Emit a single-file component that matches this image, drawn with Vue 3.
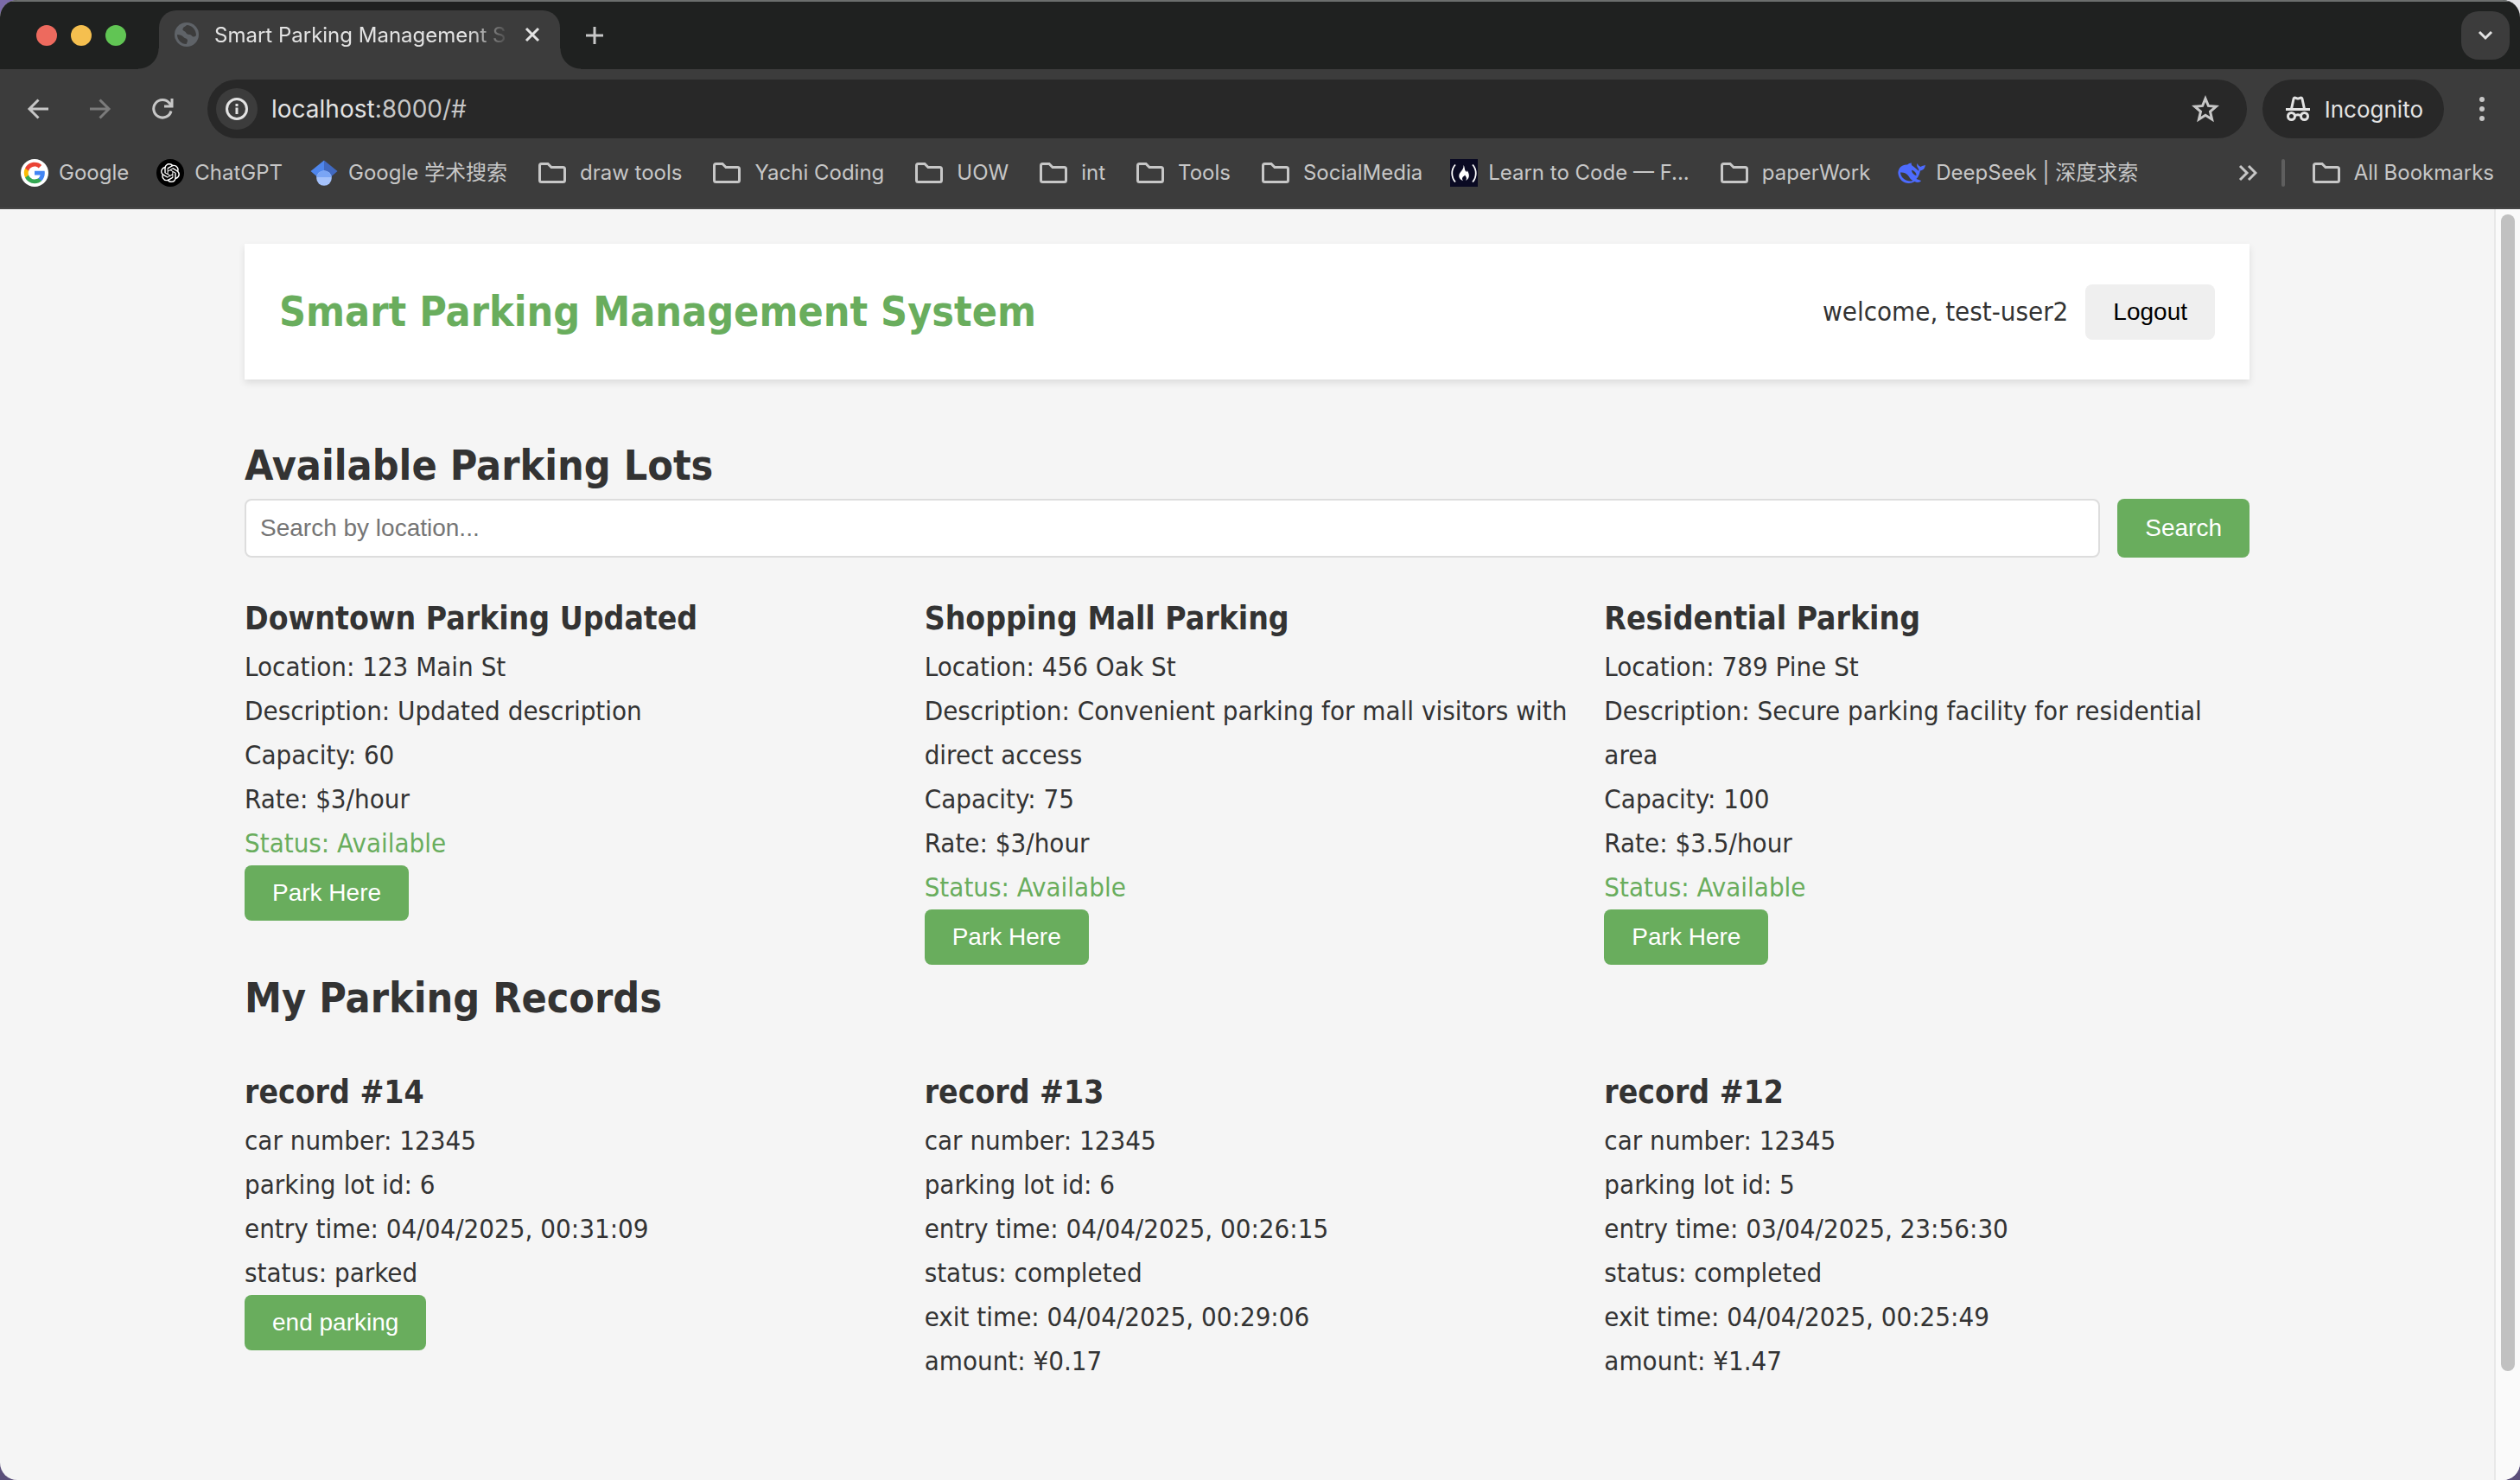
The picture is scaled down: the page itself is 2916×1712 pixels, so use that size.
<script setup>
import { ref } from 'vue'

const location = ref('')

const bookmarks = [
  { icon: 'google', label: 'Google' },
  { icon: 'chatgpt', label: 'ChatGPT' },
  { icon: 'scholar', label: 'Google 学术搜索' },
  { icon: 'folder', label: 'draw tools' },
  { icon: 'folder', label: 'Yachi Coding' },
  { icon: 'folder', label: 'UOW' },
  { icon: 'folder', label: 'int' },
  { icon: 'folder', label: 'Tools' },
  { icon: 'folder', label: 'SocialMedia' },
  { icon: 'fcc', label: 'Learn to Code — F...' },
  { icon: 'folder', label: 'paperWork' },
  { icon: 'deepseek', label: 'DeepSeek | 深度求索' },
]

const lots = [
  { name: 'Downtown Parking Updated', location: '123 Main St', description: 'Updated description', capacity: 60, rate: 3 },
  { name: 'Shopping Mall Parking', location: '456 Oak St', description: 'Convenient parking for mall visitors with direct access', capacity: 75, rate: 3 },
  { name: 'Residential Parking', location: '789 Pine St', description: 'Secure parking facility for residential area', capacity: 100, rate: 3.5 },
]

const records = [
  { id: 14, car: '12345', lot: 6, entry: '04/04/2025, 00:31:09', status: 'parked' },
  { id: 13, car: '12345', lot: 6, entry: '04/04/2025, 00:26:15', status: 'completed', exit: '04/04/2025, 00:29:06', amount: '0.17' },
  { id: 12, car: '12345', lot: 5, entry: '03/04/2025, 23:56:30', status: 'completed', exit: '04/04/2025, 00:25:49', amount: '1.47' },
]
</script>

<template>
  <div class="window">
    <div class="tabstrip">
      <div class="lights">
        <span class="light red"></span>
        <span class="light yellow"></span>
        <span class="light green"></span>
      </div>
      <div class="tab">
        <svg class="favicon" viewBox="0 0 28 28">
          <circle cx="14" cy="14" r="14" fill="#5f6368" />
          <path d="M3 14c3 0 6 1 7.500 3 1.500 1.800 4 1 4.500 3.500.3 1.800-1 3-1.200 4.500C7.500 25 3 20 3 14zM14 3c-1 1.500-4 2-4.500 4.500C9 10 12 9.500 13 11.500c.8 1.700 2.500 2.800 4.500 2.500 2-.3 2.500 2.500 4.500 2.500 1.200 0 2.300-.7 3-1.500C25 8 20 3 14 3z" fill="#3c3c3c" />
        </svg>
        <span class="tab-title">Smart Parking Management S</span>
        <button class="icon-button" aria-label="Close tab">
          <svg width="20" height="20" viewBox="0 0 20 20"><path d="M3 3l14 14M17 3L3 17" stroke="#e3e3e3" stroke-width="3" /></svg>
        </button>
      </div>
      <button class="icon-button new-tab" aria-label="New tab">
        <svg width="20" height="20" viewBox="0 0 20 20"><path d="M10 0v20M0 10h20" stroke="#c7c7c7" stroke-width="3" /></svg>
      </button>
      <button class="tab-search" aria-label="Search tabs">
        <svg width="18" height="12" viewBox="0 0 18 12"><path d="M2 2l7 7 7-7" fill="none" stroke="#e3e3e3" stroke-width="3" /></svg>
      </button>
    </div>

    <div class="toolbar">
      <div class="nav">
        <button class="icon-button" aria-label="Back">
          <svg width="26" height="26" viewBox="0 0 26 26"><path d="M25 13H3M13.500 2.500L3 13l10.500 10.500" fill="none" stroke="#c7c7c7" stroke-width="3" /></svg>
        </button>
        <button class="icon-button" aria-label="Forward">
          <svg width="26" height="26" viewBox="0 0 26 26"><path d="M1 13h22M12.500 2.500L23 13 12.500 23.500" fill="none" stroke="#7b7b7b" stroke-width="3" /></svg>
        </button>
        <button class="icon-button" aria-label="Reload">
          <svg width="26" height="26" viewBox="0 0 26 26"><path d="M23 15.500A10.300 10.300 0 1 1 21 6.200L23.500 9M24 1v9h-9" fill="none" stroke="#c7c7c7" stroke-width="3" /></svg>
        </button>
      </div>
      <div class="address">
        <span class="info">
          <svg width="26" height="26" viewBox="0 0 26 26"><circle cx="13" cy="13" r="11.500" fill="none" stroke="#e3e3e3" stroke-width="3" /><path d="M13 11.500v7.500M13 7v3" stroke="#e3e3e3" stroke-width="3" /></svg>
        </span>
        <span class="url">localhost<span class="url-rest">:8000/#</span></span>
        <button class="icon-button star" aria-label="Bookmark this page">
          <svg width="32" height="32" viewBox="0 0 32 32"><path d="M16 4l3.400 8.400 9 .8-6.900 5.900 2.100 8.900-7.600-4.700L8.400 28l2.100-8.900-6.900-5.900 9-.8z" fill="none" stroke="#c7c7c7" stroke-width="3" /></svg>
        </button>
      </div>
      <div class="incognito">
        <svg width="30" height="30" viewBox="0 0 30 30">
          <path d="M1 15.500h28" stroke="#e3e3e3" stroke-width="3" />
          <path d="M7.500 15L10 3.500c.4-1.500 1.500-1.600 2.600-1.200l1.400.6c.7.300 1.300.3 2 0l1.400-.6c1.100-.4 2.200-.3 2.600 1.200L22.500 15" fill="none" stroke="#e3e3e3" stroke-width="3" />
          <circle cx="7.500" cy="23.500" r="4" fill="none" stroke="#e3e3e3" stroke-width="3" />
          <circle cx="22.500" cy="23.500" r="4" fill="none" stroke="#e3e3e3" stroke-width="3" />
          <path d="M11 23c2.500-1.600 5.500-1.600 8 0" fill="none" stroke="#e3e3e3" stroke-width="3" />
        </svg>
        <span>Incognito</span>
      </div>
      <button class="icon-button menu" aria-label="Menu">
        <svg width="6" height="28" viewBox="0 0 6 28" fill="#c7c7c7"><circle cx="3" cy="3" r="3" /><circle cx="3" cy="14" r="3" /><circle cx="3" cy="25" r="3" /></svg>
      </button>
    </div>

    <nav class="bookmarks" aria-label="Bookmarks">
      <a v-for="b in bookmarks" :key="b.label" class="bookmark" href="#">
        <svg v-if="b.icon === 'folder'" class="folder" viewBox="0 0 40 32"><path d="M5.500 24.500v-17q0-2 2-2h7.500l4 4h13.500q2 0 2 2v13q0 2-2 2h-25q-2 0-2-2z" fill="none" stroke="#c7c7c7" stroke-width="3" /></svg>
        <svg v-else-if="b.icon === 'google'" class="site" viewBox="0 0 32 32">
          <circle cx="16" cy="16" r="16" fill="#fff" />
          <path d="M27.800 16.300c0-.9-.1-1.700-.2-2.500H16v4.700h6.600c-.3 1.500-1.100 2.800-2.400 3.700v3h3.900c2.300-2.100 3.700-5.200 3.700-8.900z" fill="#4285f4" />
          <path d="M16 28.200c3.300 0 6-1.100 8.100-2.900l-3.900-3c-1.100.7-2.500 1.200-4.200 1.200-3.200 0-5.900-2.100-6.900-5H5.100v3.100c2 4 6.100 6.600 10.900 6.600z" fill="#34a853" />
          <path d="M9.100 18.400c-.2-.7-.4-1.500-.4-2.300s.1-1.600.4-2.300v-3.100h-4C4.200 12.300 3.800 14.100 3.800 16s.5 3.800 1.300 5.500z" fill="#fbbc05" />
          <path d="M16 8.600c1.800 0 3.400.6 4.700 1.800l3.500-3.500C22 4.900 19.300 3.800 16 3.800c-4.800 0-8.900 2.700-10.900 6.800l4 3.100c1-2.900 3.700-5.100 6.900-5.100z" fill="#ea4335" />
        </svg>
        <svg v-else-if="b.icon === 'chatgpt'" class="site" viewBox="0 0 32 32">
          <circle cx="16" cy="16" r="16" fill="#000" />
          <g transform="translate(5 5) scale(.9167)" fill="#fff"><path d="M22.282 9.821a5.985 5.985 0 0 0-.516-4.910 6.046 6.046 0 0 0-6.510-2.900A6.065 6.065 0 0 0 4.981 4.182a5.985 5.985 0 0 0-3.998 2.900 6.046 6.046 0 0 0 .743 7.097 5.980 5.980 0 0 0 .510 4.911 6.051 6.051 0 0 0 6.515 2.900A5.985 5.985 0 0 0 13.260 24a6.056 6.056 0 0 0 5.772-4.206 5.990 5.990 0 0 0 3.998-2.900 6.056 6.056 0 0 0-.747-7.073zM13.260 22.430a4.476 4.476 0 0 1-2.876-1.040l.141-.081 4.779-2.758a.795.795 0 0 0 .392-.681v-6.737l2.020 1.168a.071.071 0 0 1 .038.052v5.583a4.504 4.504 0 0 1-4.494 4.494zM3.600 18.304a4.470 4.470 0 0 1-.535-3.014l.142.085 4.783 2.759a.771.771 0 0 0 .780 0l5.843-3.369v2.332a.080.080 0 0 1-.033.062L9.740 19.950a4.500 4.500 0 0 1-6.140-1.646zM2.340 7.896a4.485 4.485 0 0 1 2.366-1.973V11.600a.766.766 0 0 0 .388.676l5.815 3.355-2.020 1.168a.076.076 0 0 1-.071 0l-4.830-2.786A4.504 4.504 0 0 1 2.340 7.872zm16.597 3.855l-5.833-3.387L15.119 7.200a.076.076 0 0 1 .071 0l4.830 2.791a4.494 4.494 0 0 1-.676 8.105v-5.678a.790.790 0 0 0-.407-.667zm2.010-3.023l-.141-.085-4.774-2.782a.776.776 0 0 0-.785 0L9.409 9.230V6.897a.066.066 0 0 1 .028-.061l4.830-2.787a4.500 4.500 0 0 1 6.680 4.660zm-12.640 4.135l-2.020-1.164a.080.080 0 0 1-.038-.057V6.075a4.500 4.500 0 0 1 7.375-3.453l-.142.080L8.704 5.460a.795.795 0 0 0-.393.681zm1.097-2.365l2.602-1.500 2.607 1.500v2.999l-2.597 1.500-2.607-1.500z" /></g>
        </svg>
        <svg v-else-if="b.icon === 'scholar'" class="site" viewBox="0 0 32 32">
          <path d="M16 1.500L.5 14 8 20.500l8-2z" fill="#4f86ec" />
          <path d="M16 1.500L31.500 14 24 20.500l-8-2z" fill="#4169c0" />
          <circle cx="16" cy="22" r="8.800" fill="#a5c2fb" />
          <path d="M7.300 21a8.800 8.800 0 0 1 17.400 0z" fill="#7aa5f5" />
        </svg>
        <svg v-else-if="b.icon === 'fcc'" class="site" viewBox="0 0 32 32">
          <path d="M0 0h32v32H0z" fill="#0a0a23" />
          <path d="M6 6.500C1 12 1 21 6 26.500M26 6.500c5 5.500 5 14.500 0 20" fill="none" stroke="#fff" stroke-width="1.800" />
          <path d="M15.500 7c2 3 .5 5 3 7.500 1 1 1.200-.2.800-1.500 2.500 2.500 4 7.500.7 10.500l-2 1.500c2-3 .5-4.500-1-6.500-.3 1.500-1.500 1-2.500 2.500-1 1.600-.5 3 .7 4.200-6-2-6-7.200-2.700-10.700 2-2.200 3.400-4.300 3-7.500z" fill="#fff" />
        </svg>
        <svg v-else class="site" viewBox="0 0 32 32">
          <path d="M.3 16C.8 9.500 5.500 6 11 6.500c1.500-1.200 3-1.900 5-2-.8 1.600.2 3 2 4 2.200 1.400 4 3.300 6 5.300.8-1 .2-2.600-1-4.100-1.200-1.500-.9-3.300-.5-4.700.8 2 2.300 3 4 4 1.500-1.500 3.300-1 5.400-2.300-.2 3.800-2.700 6.300-6 6.800-.4 3.600-1.900 6.800-4.400 9.500l5.500 2c-1.500 2.500-5 2.300-7.500 1C12 30.500 1.500 27 .3 16zM3 15.500c.8 7.500 8.500 11.500 14.500 9.500-3-1.500-4-4-6-6.500-2.200-2.400-5-3.500-8.500-3zM16 12.800c.3 3 2.500 5.700 5.500 6.200.2-3-2.500-5.700-5.500-6.200z" fill="#4d6bfe" fill-rule="evenodd" />
        </svg>
        <span>{{ b.label }}</span>
      </a>
      <div class="bookmarks-end">
        <button class="icon-button" aria-label="More bookmarks">
          <svg width="22" height="20" viewBox="0 0 22 20"><path d="M2 2l8 8-8 8M12 2l8 8-8 8" fill="none" stroke="#c7c7c7" stroke-width="3" /></svg>
        </button>
        <span class="divider"></span>
        <a class="bookmark" href="#">
          <svg class="folder" viewBox="0 0 40 32"><path d="M5.500 24.500v-17q0-2 2-2h7.500l4 4h13.500q2 0 2 2v13q0 2-2 2h-25q-2 0-2-2z" fill="none" stroke="#c7c7c7" stroke-width="3" /></svg>
          <span>All Bookmarks</span>
        </a>
      </div>
    </nav>

    <div class="viewport">
      <div class="page">
        <div class="container">
          <header class="header">
            <h1>Smart Parking Management System</h1>
            <div class="user">
              <span>welcome, test-user2</span>
              <button class="btn btn-plain">Logout</button>
            </div>
          </header>

          <main>
            <h2>Available Parking Lots</h2>
            <form class="search" @submit.prevent>
              <input v-model="location" type="text" placeholder="Search by location..." aria-label="Search by location" />
              <button class="btn" type="submit">Search</button>
            </form>
            <div class="grid">
              <section v-for="lot in lots" :key="lot.name">
                <h3>{{ lot.name }}</h3>
                <p>Location: {{ lot.location }}</p>
                <p>Description: {{ lot.description }}</p>
                <p>Capacity: {{ lot.capacity }}</p>
                <p>Rate: ${{ lot.rate }}/hour</p>
                <p class="available">Status: Available</p>
                <button class="btn">Park Here</button>
              </section>
            </div>

            <h2>My Parking Records</h2>
            <div class="grid records">
              <section v-for="r in records" :key="r.id">
                <h3>record #{{ r.id }}</h3>
                <p>car number: {{ r.car }}</p>
                <p>parking lot id: {{ r.lot }}</p>
                <p>entry time: {{ r.entry }}</p>
                <p>status: {{ r.status }}</p>
                <template v-if="r.exit">
                  <p>exit time: {{ r.exit }}</p>
                  <p>amount: ¥{{ r.amount }}</p>
                </template>
                <button v-else class="btn">end parking</button>
              </section>
            </div>
          </main>
        </div>
      </div>
      <div class="scrollbar"><div class="thumb"></div></div>
    </div>
  </div>
</template>

<style>
body {
  background: linear-gradient(90deg, #7a6aa8 50%, #e4e4e8 50%) top / 100% 50% no-repeat, #5b4f7a;
}
</style>

<style scoped>
* {
  box-sizing: border-box;
}

.window {
  display: flex;
  flex-direction: column;
  min-height: 100vh;
  border-radius: 20px;
  overflow: hidden;
  background: #f5f5f5;
  color: #c7c7c7;
  font-family: Inter, "Noto Sans CJK SC", sans-serif;
  font-size: 24px;
}

.icon-button {
  display: flex;
  padding: 0;
  border: 0;
  background: none;
}

.tabstrip {
  display: flex;
  align-items: center;
  height: 80px;
  padding: 0 12px 0 42px;
  border-top: 2px solid #6b6e6d;
  background: #1f2120;
}

.lights {
  display: flex;
  gap: 16px;
}

.light {
  width: 24px;
  height: 24px;
  border-radius: 50%;
}

.red {
  background: #ed6a5e;
}

.yellow {
  background: #f5bf4f;
}

.green {
  background: #61c554;
}

.tab {
  position: relative;
  display: flex;
  align-items: center;
  align-self: flex-end;
  width: 464px;
  height: 68px;
  margin-left: 38px;
  padding: 0 22px 12px 18px;
  border-radius: 20px 20px 0 0;
  background: #3c3c3c;
  color: #e3e3e3;
}

.tab::before,
.tab::after {
  content: "";
  position: absolute;
  bottom: 0;
  width: 24px;
  height: 24px;
}

.tab::before {
  right: 100%;
  background: radial-gradient(circle at 0 0, #1f2120 23px, #3c3c3c 24px);
}

.tab::after {
  left: 100%;
  background: radial-gradient(circle at 100% 0, #1f2120 23px, #3c3c3c 24px);
}

.favicon {
  flex: none;
  width: 28px;
  height: 28px;
  margin-right: 18px;
}

.tab-title {
  flex: 1;
  margin-right: 16px;
  white-space: nowrap;
  mask-image: linear-gradient(90deg, #000 86%, transparent);
}

.new-tab {
  margin-left: 30px;
}

.tab-search {
  display: flex;
  align-items: center;
  justify-content: center;
  width: 56px;
  height: 56px;
  margin-left: auto;
  padding: 0;
  border: 0;
  border-radius: 20px;
  background: #3c3c3c;
}

.toolbar {
  display: flex;
  align-items: center;
  gap: 18px;
  padding: 12px 41px 0 31px;
  background: #3c3c3c;
}

.nav {
  display: flex;
  gap: 46px;
  margin-right: 21px;
}

.address {
  display: flex;
  flex: 1;
  align-items: center;
  height: 68px;
  padding: 0 32px 0 10px;
  border-radius: 34px;
  background: #282828;
}

.info {
  display: flex;
  align-items: center;
  justify-content: center;
  width: 48px;
  height: 48px;
  margin-right: 16px;
  border-radius: 50%;
  background: #3c3c3c;
}

.url {
  color: #e3e3e3;
  font-size: 28px;
}

.url-rest {
  color: #c7c7c7;
}

.star {
  margin-left: auto;
}

.incognito {
  display: flex;
  align-items: center;
  gap: 16px;
  height: 68px;
  padding: 0 24px 0 26px;
  border-radius: 34px;
  background: #282828;
  color: #e3e3e3;
  font-size: 26px;
}

.menu {
  margin-left: 23px;
}

.bookmarks {
  display: flex;
  align-items: center;
  gap: 32px;
  height: 82px;
  padding: 0 30px 0 24px;
  border-bottom: 2px solid #464646;
  background: #3c3c3c;
  line-height: 28px;
  white-space: nowrap;
}

.bookmark {
  display: flex;
  align-items: center;
  gap: 12px;
  height: 32px;
  color: inherit;
  text-decoration: none;
}

.bookmark span {
  height: 28px;
}

.site {
  width: 32px;
  height: 32px;
}

.folder {
  width: 40px;
  height: 32px;
}

.bookmarks-end {
  display: flex;
  align-items: center;
  gap: 28px;
  margin-left: auto;
}

.divider {
  width: 4px;
  height: 32px;
  border-radius: 2px;
  background: #5e5e5e;
}

.viewport {
  display: flex;
  flex: 1;
}

.page {
  flex: 1;
  color: #333;
  font-family: "DejaVu Sans Condensed", "DejaVu Sans", sans-serif;
  font-size: 31px;
  line-height: 51px;
}

.container {
  max-width: 2400px;
  margin: 0 auto;
  padding: 40px;
}

.header {
  display: flex;
  align-items: center;
  justify-content: space-between;
  margin-bottom: 61px;
  padding: 40px;
  background: #fff;
  box-shadow: 0 4px 8px rgba(0, 0, 0, 0.1);
}

h1,
h2,
h3,
p {
  margin: 0;
}

h1,
h2 {
  font-size: 48px;
  line-height: 77px;
}

h1 {
  color: #69ad5d;
}

h3 {
  font-size: 37px;
  line-height: 61px;
}

.user {
  display: flex;
  align-items: center;
  gap: 20px;
}

.btn {
  display: block;
  padding: 16px 32px;
  border: 0;
  border-radius: 8px;
  background: #69ad5d;
  color: #fff;
  font-family: "Liberation Sans", sans-serif;
  font-size: 28px;
  line-height: 32px;
}

.btn-plain {
  background: #efefef;
  color: #000;
}

.search {
  display: flex;
  gap: 20px;
  margin-bottom: 40px;
}

.search input {
  flex: 1;
  height: 68px;
  padding: 0 16px;
  border: 2px solid #ddd;
  border-radius: 8px;
  background: #fff;
  font-family: "Liberation Sans", sans-serif;
  font-size: 28px;
}

.search input::placeholder {
  color: #757575;
}

.grid {
  display: grid;
  grid-template-columns: repeat(3, 1fr);
  gap: 40px;
}

.records {
  margin-top: 40px;
}

.available {
  color: #69ad5d;
}

.scrollbar {
  width: 30px;
  padding: 6px 6px 126px;
  border-left: 2px solid #e8e8e8;
  background: #fafafa;
}

.thumb {
  width: 16px;
  height: 100%;
  border-radius: 8px;
  background: #c1c1c1;
}
</style>
